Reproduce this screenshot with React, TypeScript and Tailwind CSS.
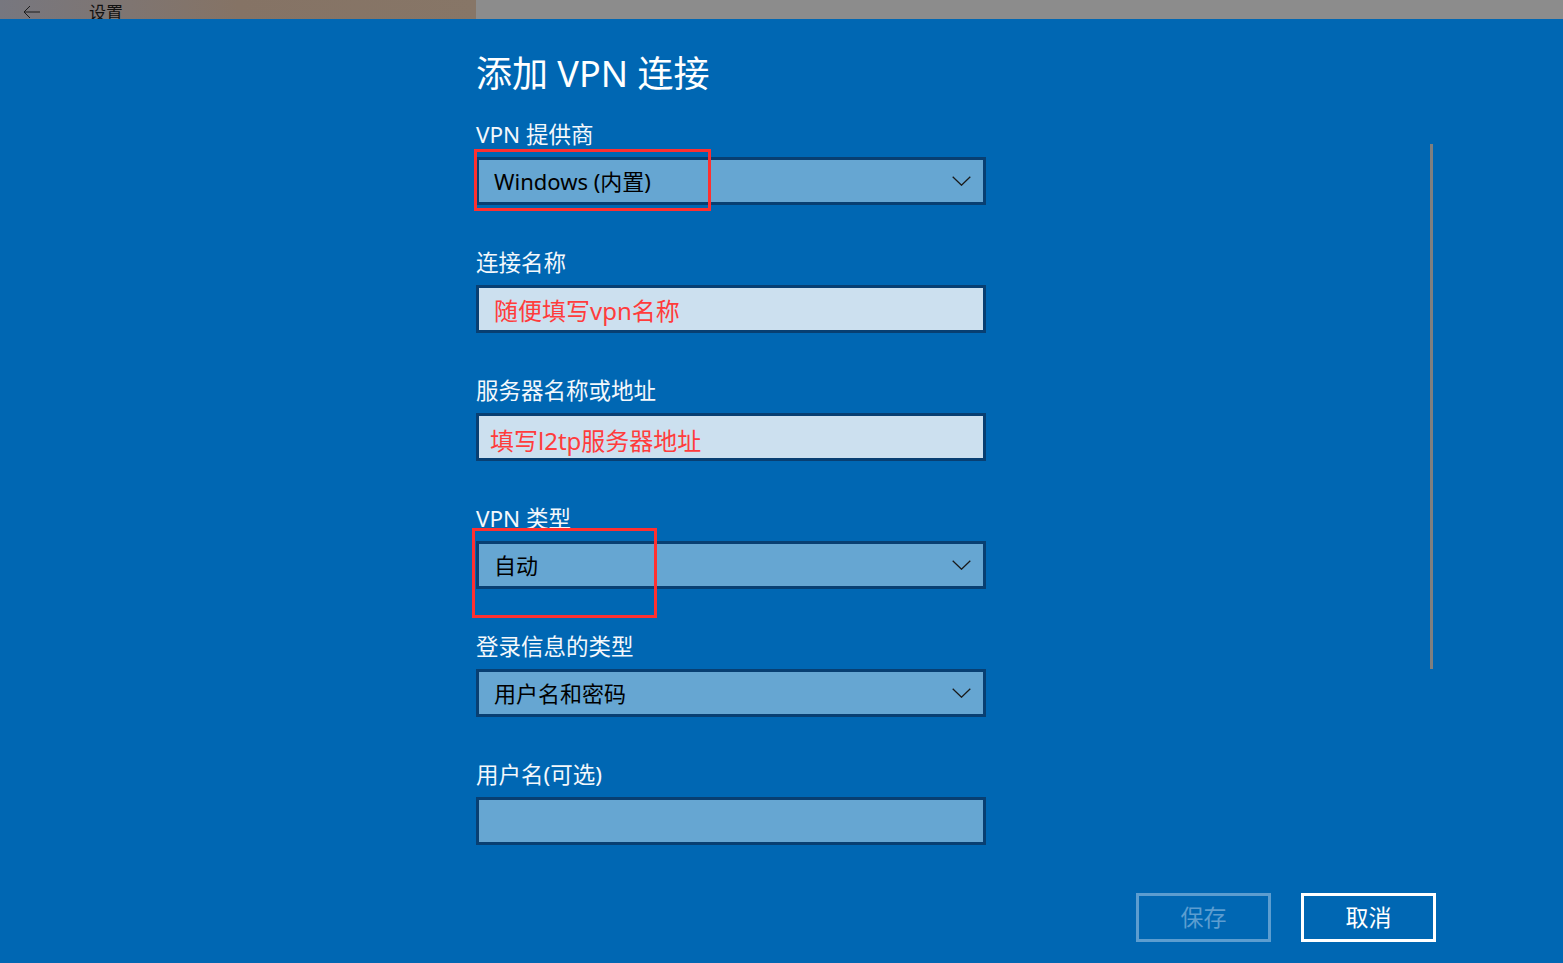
import React from "react";

const FONT = '"Noto Sans", "Noto Sans CJK SC", sans-serif';

function Chevron() {
  return (
    <svg width="19" height="10" viewBox="0 0 19 10" className="shrink-0">
      <path d="M0.7 0.7 L9.5 9.2 L18.3 0.7" fill="none" stroke="#1a1a1a" strokeWidth="1.3" />
    </svg>
  );
}

function Label({ children }: { children: React.ReactNode }) {
  return (
    <div className="h-[30px] leading-[30px] text-[22.5px] text-[#f4f8fc] mb-[7px] whitespace-nowrap">
      {children}
    </div>
  );
}

function Dropdown({ value }: { value: string }) {
  return (
    <div className="h-[48px] w-[510px] border-[3px] border-[#083f72] bg-[#66a6d2] flex items-center justify-between pl-[15px] pr-[12px]">
      <span className="text-[22px] text-black leading-none">{value}</span>
      <Chevron />
    </div>
  );
}

function TextBox({ value, pl, pt, light }: { value?: string; pl: string; pt: string; light: boolean }) {
  return (
    <div
      className={`h-[48px] w-[510px] border-[3px] border-[#083f72] flex items-center ${pl} ${pt} ${
        light ? "bg-[#cce0ef]" : "bg-[#66a6d2]"
      }`}
    >
      {value && <span className="text-[24px] text-[#ff3c3c] leading-none">{value}</span>}
    </div>
  );
}

export default function App() {
  return (
    <div className="relative w-[1563px] h-[963px] overflow-hidden bg-[#0067b3]" style={{ fontFamily: FONT }}>
      {/* top bar */}
      <div className="flex h-[19px] overflow-hidden">
        <div className="w-[476px] h-full bg-gradient-to-r from-[#77777f] via-[#857365] to-[#877667] flex items-start">
          <svg width="20" height="14" viewBox="0 0 20 14" className="ml-[22px] mt-[5px]">
            <path d="M18 7 H2 M8 1 L2 7 L8 13" fill="none" stroke="#1c1c1c" strokeWidth="1" />
          </svg>
          <span className="ml-[47px] mt-[3px] text-[17px] leading-[20px] text-[#111]">设置</span>
        </div>
        <div className="flex-1 h-full bg-[#8c8c8c]" />
      </div>

      {/* form */}
      <div className="pl-[476px] pt-[31px]">
        <div className="h-[48px] leading-[48px] text-[36px] text-white whitespace-nowrap mb-[22px]">
          添加 VPN 连接
        </div>
        <div className="flex flex-col gap-[43px]">
          <div>
            <Label>VPN 提供商</Label>
            <Dropdown value="Windows (内置)" />
          </div>
          <div>
            <Label>连接名称</Label>
            <TextBox value="随便填写vpn名称" pl="pl-[15px]" pt="pt-[3px]" light />
          </div>
          <div>
            <Label>服务器名称或地址</Label>
            <TextBox value="填写l2tp服务器地址" pl="pl-[11px]" pt="pt-[8px]" light />
          </div>
          <div>
            <Label>VPN 类型</Label>
            <Dropdown value="自动" />
          </div>
          <div>
            <Label>登录信息的类型</Label>
            <Dropdown value="用户名和密码" />
          </div>
          <div>
            <Label>用户名(可选)</Label>
            <TextBox pl="pl-[15px]" pt="pt-0" light={false} />
          </div>
        </div>
      </div>

      {/* buttons */}
      <div className="flex justify-end gap-[30px] pr-[127px] mt-[48px]">
        <div className="w-[135px] h-[49px] border-[3px] border-[#5c9dd0] flex items-center justify-center text-[23px] text-[#5c9dd0]">
          保存
        </div>
        <div className="w-[135px] h-[49px] border-[3px] border-white flex items-center justify-center text-[23px] text-white">
          取消
        </div>
      </div>

      {/* scrollbar */}
      <div className="absolute left-[1430px] top-[144px] w-[3px] h-[525px] bg-[#7f7f7f]" />

      {/* red annotation boxes */}
      <div className="absolute left-[474px] top-[149px] w-[237px] h-[62px] border-[3px] border-[#ff3030]" />
      <div className="absolute left-[472px] top-[528px] w-[185px] h-[90px] border-[3px] border-[#ff3030]" />
    </div>
  );
}
